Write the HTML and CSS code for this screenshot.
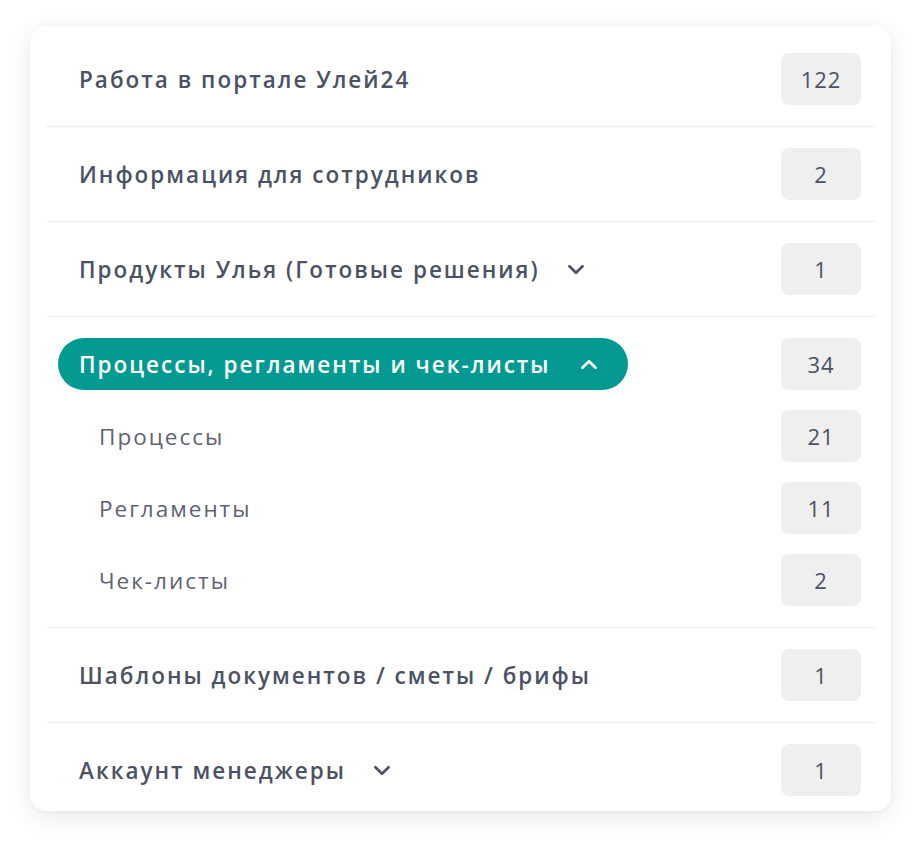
FILE: index.html
```html
<!DOCTYPE html>
<html lang="ru">
<head>
<meta charset="utf-8">
<link rel="stylesheet" href="styles.css">
</head>
<body>
<div class="card">
  <div class="row">
    <div class="title">Работа в портале Улей24</div>
    <div class="badge">122</div>
  </div>
  <div class="row">
    <div class="title">Информация для сотрудников</div>
    <div class="badge">2</div>
  </div>
  <div class="row">
    <div class="title">Продукты Улья (Готовые решения)
      <svg class="chev" viewBox="0 0 16 10"><path d="M2 2l6 6 6-6"/></svg>
    </div>
    <div class="badge">1</div>
  </div>
  <div class="row section">
    <div class="head">
      <div class="pill">Процессы, регламенты и чек-листы
        <svg class="chev up" viewBox="0 0 16 10"><path d="M2 8l6-6 6 6"/></svg>
      </div>
      <div class="badge">34</div>
    </div>
    <div class="sub">
      <div class="subtitle">Процессы</div>
      <div class="badge">21</div>
    </div>
    <div class="sub">
      <div class="subtitle">Регламенты</div>
      <div class="badge">11</div>
    </div>
    <div class="sub">
      <div class="subtitle">Чек-листы</div>
      <div class="badge">2</div>
    </div>
  </div>
  <div class="row">
    <div class="title">Шаблоны документов / сметы / брифы</div>
    <div class="badge">1</div>
  </div>
  <div class="row">
    <div class="title">Аккаунт менеджеры
      <svg class="chev" viewBox="0 0 16 10"><path d="M2 2l6 6 6-6"/></svg>
    </div>
    <div class="badge">1</div>
  </div>
</div>
</body>
</html>
```
FILE: styles.css
```css
* { box-sizing: border-box; }
html, body { margin: 0; padding: 0; background: #ffffff; }
body {
  font-family: "Open Sans", "Noto Sans", sans-serif;
  padding: 26px 30px 0 30px;
  width: 921px;
  height: 845px;
  overflow: hidden;
}
.card {
  width: 861px;
  height: 785px;
  background: #fff;
  border-radius: 16px;
  box-shadow: 0 6px 26px rgba(0, 0, 0, 0.09), 0 1px 4px rgba(0,0,0,0.04);
  padding: 6px 16px 0 16px;
}
.row {
  display: flex;
  align-items: center;
  justify-content: space-between;
  padding: 21px 14px 21px 0;
  border-bottom: 1.5px solid #eeeeee;
}
.row:last-child { border-bottom: none; padding-bottom: 17px; }
.title {
  display: flex;
  align-items: center;
  padding-left: 33px;
  font-size: 22.5px;
  letter-spacing: 2px;
  font-weight: 600;
  color: #4b5263;
  white-space: nowrap;
}
.chev {
  width: 18px;
  height: 11px;
  margin-left: 27px;
  fill: none;
  stroke: #4b5263;
  stroke-width: 2.4;
  stroke-linecap: round;
  stroke-linejoin: round;
}
.section {
  display: flex;
  flex-direction: column;
  align-items: stretch;
  gap: 20px;
}
.head, .sub {
  display: flex;
  align-items: center;
  justify-content: space-between;
}
.pill {
  display: flex;
  align-items: center;
  height: 52px;
  margin-left: 12px;
  padding: 0 30px 0 21px;
  border-radius: 26px;
  background: #049a91;
  color: #ffffff;
  font-size: 22.5px;
  letter-spacing: 2px;
  font-weight: 600;
  white-space: nowrap;
}
.pill .chev { stroke: #ffffff; margin-left: 29px; }
.subtitle {
  padding-left: 53px;
  font-size: 22.5px;
  letter-spacing: 2px;
  font-weight: 400;
  color: #5d6372;
}
.badge {
  width: 80px;
  height: 52px;
  flex: none;
  border-radius: 8px;
  background: #efefef;
  color: #4b5263;
  font-size: 22px;
  letter-spacing: 1px;
  font-weight: 400;
  display: flex;
  align-items: center;
  justify-content: center;
}
```
